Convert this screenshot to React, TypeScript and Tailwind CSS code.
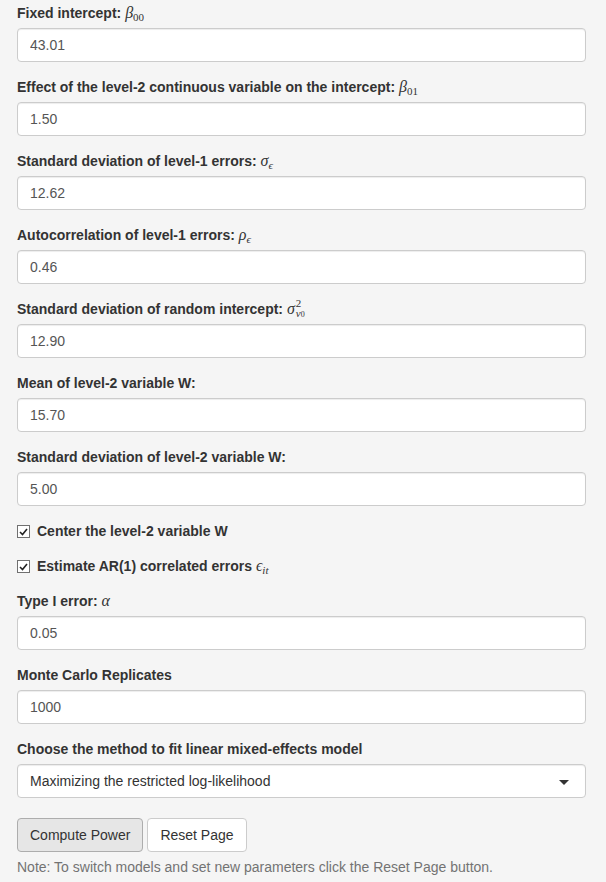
import React from 'react'

const mathFont = "font-['Liberation_Serif','DejaVu_Serif',serif] italic leading-none"

function M({ children }: { children: React.ReactNode }) {
  return <span className={`${mathFont} text-[16px] font-normal`}>{children}</span>
}

function Sub({ children, italic }: { children: React.ReactNode; italic?: boolean }) {
  return (
    <sub className={`${italic ? 'italic' : 'not-italic'} text-[11px] relative -bottom-[3px] align-baseline`}>
      {children}
    </sub>
  )
}

function TextInput({ value }: { value: string }) {
  return (
    <input
      readOnly
      value={value}
      className="block w-full h-[34px] rounded-[4px] border border-[#ccc] bg-white px-3 text-[14px] text-[#555] shadow-[inset_0_1px_1px_rgba(0,0,0,0.075)] outline-none"
    />
  )
}

function Field({ label, value }: { label: React.ReactNode; value: string }) {
  return (
    <div className="mb-[15px]">
      <label className="block mb-[5px] font-bold h-[20px]">{label}</label>
      <TextInput value={value} />
    </div>
  )
}

function Check({ children }: { children: React.ReactNode }) {
  return (
    <div className="mb-[15px] flex h-[20px] items-start">
      <span className="mt-[4px] mr-[7px] flex h-[13px] w-[13px] items-center justify-center border border-[#707070] bg-white">
        <svg width="9" height="8" viewBox="0 0 9 8">
          <path d="M1 4 L3.5 6.5 L8 1" fill="none" stroke="#222" strokeWidth="1.6" />
        </svg>
      </span>
      <span className="font-bold">{children}</span>
    </div>
  )
}

export default function App() {
  return (
    <div className="min-h-screen bg-[#f5f5f5] pl-[17px] pr-[20px] pt-[3px] font-['Liberation_Sans',Arial,sans-serif] text-[14px] leading-[20px] text-[#333]">
      <Field
        label={<>Fixed intercept: <M>β<Sub>00</Sub></M></>}
        value="43.01"
      />
      <Field
        label={<>Effect of the level-2 continuous variable on the intercept: <M>β<Sub>01</Sub></M></>}
        value="1.50"
      />
      <Field
        label={<>Standard deviation of level-1 errors: <M>σ<Sub italic>ϵ</Sub></M></>}
        value="12.62"
      />
      <Field
        label={<>Autocorrelation of level-1 errors: <M>ρ<Sub italic>ϵ</Sub></M></>}
        value="0.46"
      />
      <Field
        label={
          <>
            Standard deviation of random intercept:{' '}
            <M>
              σ
              <span className="relative -top-[7px] ml-[1px] inline-flex flex-col align-baseline text-[11px] leading-[10px]">
                <span className="not-italic">2</span>
                <span>
                  ν<span className="not-italic text-[8px]">0</span>
                </span>
              </span>
            </M>
          </>
        }
        value="12.90"
      />
      <Field label="Mean of level-2 variable W:" value="15.70" />
      <Field label="Standard deviation of level-2 variable W:" value="5.00" />

      <Check>Center the level-2 variable W</Check>
      <Check>
        Estimate AR(1) correlated errors <M>ϵ<Sub italic>it</Sub></M>
      </Check>

      <Field label={<>Type I error: <M>α</M></>} value="0.05" />
      <Field label="Monte Carlo Replicates" value="1000" />

      <div>
        <label className="block mb-[5px] font-bold h-[20px]">
          Choose the method to fit linear mixed-effects model
        </label>
        <div className="relative flex h-[34px] items-center rounded-[4px] border border-[#ccc] bg-white px-3 shadow-[inset_0_1px_1px_rgba(0,0,0,0.075)]">
          <span>Maximizing the restricted log-likelihood</span>
          <span className="absolute right-[16px] top-[15px] h-0 w-0 border-x-[5px] border-t-[5px] border-x-transparent border-t-[#333]" />
        </div>
      </div>

      <div className="mt-[20px] flex gap-[4px]">
        <button className="h-[34px] rounded-[4px] border border-[#adadad] bg-[#e6e6e6] px-3 text-[#333]">
          Compute Power
        </button>
        <button className="h-[34px] rounded-[4px] border border-[#ccc] bg-white px-3 text-[#333]">
          Reset Page
        </button>
      </div>
      <p className="mt-[5px] text-[#737373]">
        Note: To switch models and set new parameters click the Reset Page button.
      </p>
    </div>
  )
}
